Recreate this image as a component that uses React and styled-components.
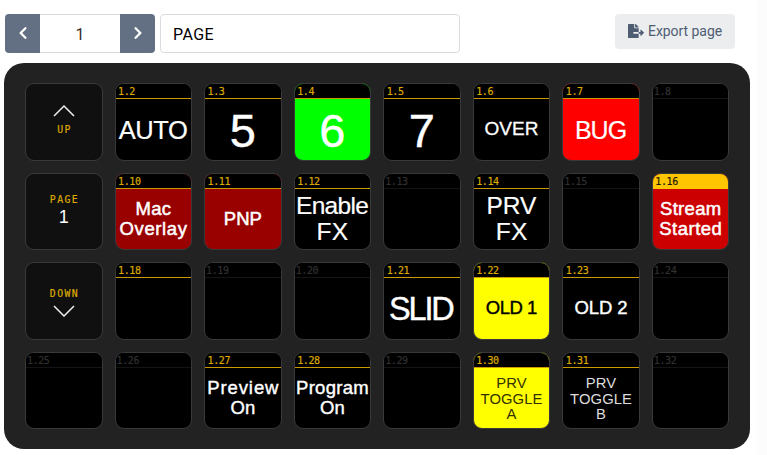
import React from 'react';
import styled, { createGlobalStyle } from 'styled-components';
import { FaChevronLeft, FaChevronRight, FaFileExport } from 'react-icons/fa';

const GlobalStyle = createGlobalStyle`
  * { box-sizing: border-box; }
  body { margin: 0; overflow: hidden; background: #fff; font-family: Roboto, sans-serif; }
`;

const Page = styled.main`
  width: 767px;
  height: 455px;
  padding: 14px 0 0 4px;
  background: linear-gradient(to right, #fff 755px, #fcfcfc 759px);
`;

const Toolbar = styled.header`
  display: flex;
  align-items: flex-start;
  width: 731px;
  height: 39px;
  padding-left: 1px;
`;

const StepButton = styled.button`
  display: flex;
  align-items: center;
  justify-content: center;
  width: 35px;
  height: 39px;
  padding: 0 0 1px;
  border: 0;
  border-radius: ${(p) => (p.$end ? '0 4px 4px 0' : '4px 0 0 4px')};
  background: #636f83;
  color: #fff;
  font-size: 14px;
`;

const PageNumber = styled.div`
  display: flex;
  align-items: center;
  justify-content: center;
  width: 80px;
  height: 39px;
  padding-top: 2px;
  border: solid #d8dbe0;
  border-width: 1px 0;
  color: #3c2c28;
  font-size: 16px;
`;

const PageName = styled.div`
  display: flex;
  align-items: center;
  width: 300px;
  height: 39px;
  margin-left: 5px;
  padding: 2px 12px 0;
  border: 1px solid #d8dbe0;
  border-radius: 4px;
  color: #000;
  font-size: 16px;
  letter-spacing: 0.4px;
`;

const ExportButton = styled.button`
  display: flex;
  align-items: center;
  gap: 4px;
  width: 120px;
  height: 35px;
  margin-left: auto;
  padding: 0 0 1px 13px;
  border: 0;
  border-radius: 4px;
  background: #ebedef;
  color: #4f5d73;
  font: 14px Roboto, sans-serif;
  letter-spacing: -0.05px;
  white-space: nowrap;
`;

const Deck = styled.section`
  display: grid;
  grid-template-columns: repeat(8, 77.5px);
  grid-template-rows: repeat(4, 77.5px);
  gap: 12.05px;
  width: 746px;
  height: 386px;
  margin-top: 10px;
  padding: 20px 21px;
  border-radius: 20px;
  background: #222;
`;

const Key = styled.div`
  display: flex;
  flex-direction: column;
  overflow: hidden;
  border: 1px solid #393939;
  border-radius: 9px;
  background: ${(p) => p.$bg || '#000'};
`;

const KeyHeader = styled.div`
  flex: none;
  height: 15px;
  padding: 1px 0 0 ${(p) => (p.$empty ? 1 : 2.5)}px;
  border-bottom: 1px solid ${(p) => (p.$empty ? '#141414' : p.$pressed ? '#ffc600' : '#c99b00')};
  background: ${(p) => (p.$pressed ? '#ffc600' : '#000')};
  color: ${(p) => (p.$empty ? '#303030' : p.$pressed ? '#221a00' : '#dba900')};
  font: 10px/13px 'DejaVu Sans Mono', monospace;
  letter-spacing: -0.4px;
  -webkit-text-stroke: 0.2px currentColor;
`;

const KeyBody = styled.div`
  display: flex;
  flex: 1;
  flex-direction: column;
  align-items: center;
  padding-top: ${(p) => p.$top || 0}px;
  color: ${(p) => p.$color || '#fff'};
`;

const Line = styled.span`
  height: ${(p) => p.$pitch || 20}px;
  font: ${(p) => p.$size}px/${(p) => p.$pitch || 20}px 'Liberation Sans', Arial, sans-serif;
  letter-spacing: ${(p) => p.$ls || 0}px;
  margin-right: ${(p) => -(p.$ls || 0)}px;
  white-space: pre;
  -webkit-text-stroke: ${(p) => p.$stroke || 0}px currentColor;
`;

const NavKey = styled(Key)`
  align-items: center;
  gap: ${(p) => p.$gap || 0}px;
  padding-top: ${(p) => p.$top}px;
  background: #101010;
`;

const NavText = styled.span`
  height: 14px;
  color: #dba900;
  font: 9.8px/14px 'DejaVu Sans Mono', monospace;
  letter-spacing: 1.4px;
  margin-right: -1.4px;
  -webkit-text-stroke: 0.2px currentColor;
`;

const NavNumber = styled.span`
  color: #fff;
  font: 18px/20px 'Liberation Sans', Arial, sans-serif;
`;

const Chevron = styled.svg`
  width: 22px;
  height: 13px;
  fill: none;
  stroke: #eee;
  stroke-width: 1.5;
`;

const t = (text, size, ls = 0, stroke = 0) => ({ text, size, ls, stroke });

const keys = [
  { nav: 'up' },
  { id: '1.2', top: 16, pitch: 30, lines: [t('AUTO', 25.5, -0.4, 0.2)] },
  { id: '1.3', top: 7, pitch: 50, lines: [t('5', 47, 0, 0.4)] },
  { id: '1.4', bg: '#00ff00', top: 7, pitch: 50, lines: [t('6', 47, 0, 0.4)] },
  { id: '1.5', top: 7, pitch: 50, lines: [t('7', 47, 0, 0.4)] },
  { id: '1.6', top: 20, lines: [t('OVER', 19, 0, 0.3)] },
  { id: '1.7', bg: '#ff0000', top: 16, pitch: 30, lines: [t('BUG', 25, -1, 0.2)] },
  { id: '1.8' },
  { nav: 'page' },
  { id: '1.10', bg: '#990000', top: 10, lines: [t('Mac', 18.5, 0.2, 0.5), t('Overlay', 18.5, 0.6, 0.5)] },
  { id: '1.11', bg: '#990000', top: 20, lines: [t('PNP', 18.5, 0, 0.5)] },
  { id: '1.12', top: 4, pitch: 26.5, lines: [t('Enable', 24.5, -0.7, 0.2), t('FX', 24.5, 0.3, 0.2)] },
  { id: '1.13' },
  { id: '1.14', top: 4, pitch: 26.5, lines: [t('PRV', 24.5, 0, 0.2), t('FX', 24.5, 0.3, 0.2)] },
  { id: '1.15' },
  { id: '1.16', bg: '#cc0000', pressed: true, top: 10, lines: [t('Stream', 18.5, 0.3, 0.5), t('Started', 18.5, 0.5, 0.5)] },
  { nav: 'down' },
  { id: '1.18', live: true },
  { id: '1.19' },
  { id: '1.20' },
  { id: '1.21', top: 13, pitch: 36, lines: [t('SLID', 32.5, -2.2, 0.4)] },
  { id: '1.22', bg: '#ffff00', color: '#000', top: 20, lines: [t('OLD 1', 18.5, -0.5, 0.4)] },
  { id: '1.23', top: 20, lines: [t('OLD 2', 18.5, -0.1, 0.4)] },
  { id: '1.24' },
  { id: '1.25' },
  { id: '1.26' },
  { id: '1.27', top: 10, lines: [t('Preview', 18.5, 0.9, 0.4), t('On', 18.5, 0.2, 0.4)] },
  { id: '1.28', top: 10, lines: [t('Program', 18.5, 0.3, 0.4), t('On', 18.5, 0.2, 0.4)] },
  { id: '1.29' },
  { id: '1.30', bg: '#ffff00', color: '#333300', top: 8.5, pitch: 15.6, lines: [t('PRV', 14.8, 0.1), t('TOGGLE', 14.8, 0.1), t('A', 14.8)] },
  { id: '1.31', color: '#ddd', top: 8.5, pitch: 15.6, lines: [t('PRV', 14.8, 0.1), t('TOGGLE', 14.8, 0.1), t('B', 14.8)] },
  { id: '1.32' },
];

function NavigationKey({ kind }) {
  if (kind === 'up') {
    return (
      <NavKey $top={20} $gap={6}>
        <Chevron viewBox="0 0 22 13"><path d="M1 12 L11 2 L21 12" /></Chevron>
        <NavText>UP</NavText>
      </NavKey>
    );
  }
  if (kind === 'page') {
    return (
      <NavKey $top={19.5}>
        <NavText>PAGE</NavText>
        <NavNumber>1</NavNumber>
      </NavKey>
    );
  }
  return (
    <NavKey $top={23.5} $gap={3}>
      <NavText>DOWN</NavText>
      <Chevron viewBox="0 0 22 13"><path d="M1 2 L11 12 L21 2" /></Chevron>
    </NavKey>
  );
}

function DeckKey({ id, bg, color, top, pitch, lines = [], pressed, live }) {
  const empty = !lines.length && !live;
  return (
    <Key $bg={bg}>
      <KeyHeader $empty={empty} $pressed={pressed}>{id}</KeyHeader>
      <KeyBody $top={top} $color={color}>
        {lines.map((l) => (
          <Line key={l.text} $size={l.size} $ls={l.ls} $stroke={l.stroke} $pitch={pitch}>
            {l.text}
          </Line>
        ))}
      </KeyBody>
    </Key>
  );
}

export default function App() {
  return (
    <>
      <GlobalStyle />
      <Page>
        <Toolbar>
          <StepButton aria-label="Previous page"><FaChevronLeft /></StepButton>
          <PageNumber>1</PageNumber>
          <StepButton $end aria-label="Next page"><FaChevronRight /></StepButton>
          <PageName>PAGE</PageName>
          <ExportButton><FaFileExport size={16} />Export page</ExportButton>
        </Toolbar>
        <Deck>
          {keys.map((k) => (k.nav ? <NavigationKey key={k.nav} kind={k.nav} /> : <DeckKey key={k.id} {...k} />))}
        </Deck>
      </Page>
    </>
  );
}
